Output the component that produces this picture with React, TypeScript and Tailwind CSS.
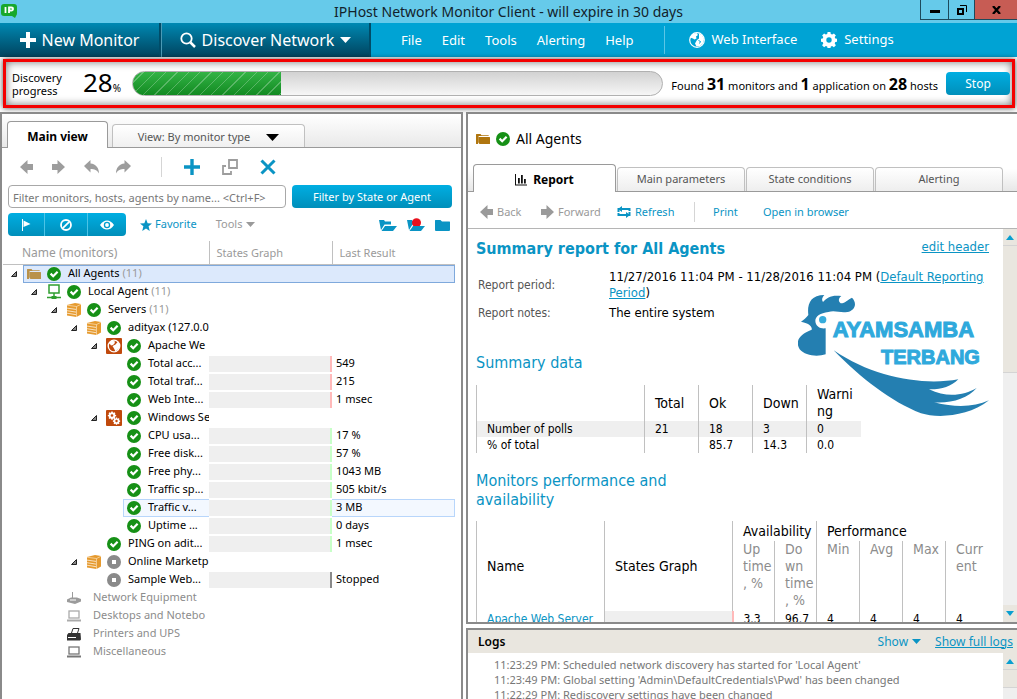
import React from 'react';

type Icon = { className?: string };

const CheckIcon = ({ className = 'size-3.5' }: Icon) => (
  <svg viewBox="0 0 14 14" className={`shrink-0 ${className}`} aria-hidden="true">
    <circle cx="7" cy="7" r="7" fill="#169016" />
    <path d="M3.6 6.6 6.2 9.2 10.6 4.8" fill="none" stroke="#fff" strokeWidth="2.2" />
  </svg>
);

const StopIcon = () => (
  <svg viewBox="0 0 14 14" className="size-3.5 shrink-0" aria-hidden="true">
    <circle cx="7" cy="7" r="7" fill="#8a8a8a" />
    <rect x="5" y="5" width="4" height="4" fill="#fff" />
  </svg>
);

const FolderIcon = ({ className = '' }: Icon) => (
  <svg viewBox="0 0 14 12" className={`h-3 w-3.5 shrink-0 ${className}`} fill="currentColor" aria-hidden="true">
    <path d="M0 1.5Q0 1 .5 1h4l1 1.2h6.8q.5 0 .5.5V3H2.6v6.5H2V11H.5Q0 11 0 10.5z" />
    <path d="M3 4h10.5q.5 0 .5.5v6q0 .5-.5.5H3.5L2.5 10V4.5z" />
  </svg>
);

const HostIcon = () => (
  <svg viewBox="0 0 14 16" className="h-4 w-3.5 shrink-0" fill="none" stroke="#2f9e2f" aria-hidden="true">
    <rect x="2" y="1" width="10" height="8" strokeWidth="1.5" />
    <path d="M7 9v5M0 13.5h14" strokeWidth="1.5" />
    <path d="M4.5 13.5h5" strokeWidth="3" />
  </svg>
);

const ServerIcon = () => (
  <svg viewBox="0 0 14 15" className="h-4 w-3.5 shrink-0" aria-hidden="true">
    <path d="M0 2.500 8 .5l6 1v10.5L9.500 14.500 0 13z" fill="#e69a2e" />
    <path d="M0 2.700 9.500 4 14 1.800M9.500 4v10.500" stroke="#fbe3bd" strokeWidth=".7" fill="none" />
    <path d="M0 5.600l9 1.300M0 8.200l9 1.400M0 10.700l9 1.500" stroke="#fff" strokeWidth=".7" fill="none" />
  </svg>
);

const ApacheIcon = () => (
  <svg viewBox="0 0 16 16" className="size-4 -mx-px shrink-0" aria-hidden="true">
    <rect width="16" height="16" fill="#c0490c" rx="1" />
    <circle cx="8" cy="8" r="5.8" fill="none" stroke="#fff" strokeWidth="1.3" />
    <path d="M2.500 5 6 2.500l3 1-.5 2L7 7l-2 .5-1-1.500zM6.500 8l3-1.500 2.500-3 1.500 3-.5 4-3.500 3-1.500-3z" fill="#fff" />
  </svg>
);

const GearShape = () => (
  <path
    fillRule="evenodd"
    d="M6.600 0h2.800l.4 2 1.400.6 1.700-1.200 2 2-1.200 1.700.6 1.400 2 .4v2.800l-2 .4-.6 1.400 1.200 1.700-2 2-1.700-1.200-1.400.6-.4 2H6.600l-.4-2-1.400-.6-1.700 1.200-2-2 1.200-1.700-.6-1.400-2-.4V6.900l2-.4.600-1.400L1.100 3.400l2-2 1.700 1.200 1.400-.6zM8 5.300a2.700 2.700 0 1 0 0 5.400 2.700 2.700 0 0 0 0-5.400z"
  />
);

const GearIcon = ({ className = 'size-4' }: Icon) => (
  <svg viewBox="0 0 16 16" className={`shrink-0 ${className}`} fill="currentColor" aria-hidden="true">
    <GearShape />
  </svg>
);

const GearsIcon = () => (
  <svg viewBox="0 0 16 16" className="size-4 -mx-px shrink-0" aria-hidden="true">
    <rect width="16" height="16" fill="#c0490c" rx="1" />
    <g fill="#fff">
      <g transform="translate(2 1.500) scale(.5)"><GearShape /></g>
      <g transform="translate(7 7.500) scale(.44)"><GearShape /></g>
    </g>
  </svg>
);

const RouterIcon = () => (
  <svg viewBox="0 0 14 12" className="h-3 w-3.5 shrink-0" fill="#9b9b9b" aria-hidden="true">
    <path d="M0 7.500 4 5.500h6l4 1.500v2.500L8 12 0 10zM5 0h1v6H5z" />
    <path d="M3 8h6" stroke="#fff" />
  </svg>
);

const LaptopIcon = ({ className = '' }: Icon) => (
  <svg viewBox="0 0 14 12" className={`h-3 w-3.5 shrink-0 ${className}`} fill="none" stroke="currentColor" aria-hidden="true">
    <rect x="2" y="1" width="10" height="7" strokeWidth="1.300" />
    <path d="M0 10.500h14" strokeWidth="2" />
  </svg>
);

const PrinterIcon = () => (
  <svg viewBox="0 0 14 14" className="size-3.5 shrink-0" aria-hidden="true">
    <path d="M4.500 6 6 1.500h6L10.500 6" fill="#fff" stroke="#333" />
    <path d="M1.500 6h12l.5 6.500-1 1H0V8z" fill="#333" />
    <path d="M1 10.500h8" stroke="#fff" />
  </svg>
);

const Arrow = ({ className = '', flip = false }: Icon & { flip?: boolean }) => (
  <svg viewBox="0 0 13 14" className={`h-3.5 w-[13px] shrink-0 ${flip ? 'rotate-180' : ''} ${className}`} fill="currentColor" aria-hidden="true">
    <path d="M0 7 7.500 0v4H13v6H7.500v4z" />
  </svg>
);

const CurveArrow = ({ flip = false }: { flip?: boolean }) => (
  <svg viewBox="0 0 15 14" className={`h-3.5 w-[15px] ${flip ? '-scale-x-100' : ''}`} fill="#9d9d9d" aria-hidden="true">
    <path d="M0 6 6.500 0v3.500C12 4 15 8 15 13.500 13 10 10.500 9 6.500 9v3.500z" />
  </svg>
);

const Caret = ({ className = '' }: Icon) => (
  <svg viewBox="0 0 10 5" preserveAspectRatio="none" className={`shrink-0 ${className}`} fill="currentColor" aria-hidden="true">
    <path d="M0 0h10L5 5z" />
  </svg>
);

const OpenFolder = ({ alert = false }: { alert?: boolean }) => (
  <svg viewBox="0 0 18 14" className="h-3.5 w-[18px]" fill="#0a94c4" aria-hidden="true">
    <path d="M0 2h5l1 1.500h6v3H5.500L2 12z" />
    {alert && <circle cx="9.500" cy="4.800" r="4.500" fill="#e8101c" />}
    <path d="M6 8h12l-4 5H2.500z" />
  </svg>
);

const GlobeIcon = () => (
  <svg viewBox="0 0 16 16" className="size-4" aria-hidden="true">
    <circle cx="8" cy="8" r="7.300" fill="none" stroke="#fff" strokeWidth="1.200" />
    <path d="M1 5.500 3.500 2 7.500 1l1.500 2-2 1.500.5 2-2 1L4 6.500zM10 1.500l3 1.500 2 4-1 4.500-3 2.500-3.500.5-1.500-3 2-3.500L10 6.500z" fill="#fff" />
    <path d="m9.500 8.500 2 1-1 2" stroke="#00a3d4" fill="none" />
  </svg>
);

const Logo = () => (
  <svg viewBox="51 27 573 369" className="h-[123px] w-[191px]" role="img" aria-label="Ayamsamba Terbang">
    <g fill="#247fb1">
      <path d="M82 90C78 58 88 30 130 30c-8 9-8 16-4 21 12-14 26-22 55-18-10 8-9 16-2 22 15-1 22-12 34-17 16 16 10 38-14 43-21 4-36-6-57 0-24 4-39 12-39 27 1 17 15 24 31 22v78c-24 8-62 5-78-15-14-24-2-45 36-59 2-8-4-18-32-24 9-5 15-11 22-20z" />
      <path d="M158 196c122 84 272 106 374 87-22 22-52 31-88 30 56 27 106 17 143-4-27 31-77 47-128 43 71 18 121 13 165-6-64 50-154 54-204 39-90-35-180-105-262-189z" />
    </g>
    <circle cx="125" cy="104" r="11" fill="#36acdc" />
    <g fill="#2fa9dc" stroke="#2fa9dc" strokeWidth="3" className="font-['Liberation_Sans',sans-serif] font-bold">
      <text x="155" y="156" fontSize="66">AYAMSAMBA</text>
      <text x="300" y="236" fontSize="60">TERBANG</text>
    </g>
  </svg>
);

type Row = {
  label: string;
  slot: string;
  open?: boolean;
  icon?: React.ReactNode;
  state?: 'ok' | 'stopped';
  count?: number;
  graph?: string;
  result?: string;
  mark?: 'selected' | 'hover';
  muted?: boolean;
};

const RED = 'bg-[#ffb9b9]';
const GREEN = 'bg-[#c8ffc8]';

const rows: Row[] = [
  { label: 'All Agents', slot: 'w-5', open: true, icon: <FolderIcon className="text-[#b9924a]" />, state: 'ok', count: 11, mark: 'selected' },
  { label: 'Local Agent', slot: 'w-10', open: true, icon: <HostIcon />, state: 'ok', count: 11 },
  { label: 'Servers', slot: 'w-15', open: true, icon: <ServerIcon />, state: 'ok', count: 11 },
  { label: 'adityax (127.0.0', slot: 'w-20', open: true, icon: <ServerIcon />, state: 'ok' },
  { label: 'Apache We', slot: 'w-25', open: true, icon: <ApacheIcon />, state: 'ok' },
  { label: 'Total acc...', slot: 'w-30', state: 'ok', graph: RED, result: '549' },
  { label: 'Total traf...', slot: 'w-30', state: 'ok', graph: RED, result: '215' },
  { label: 'Web Inte...', slot: 'w-30', state: 'ok', graph: RED, result: '1 msec' },
  { label: 'Windows Se', slot: 'w-25', open: true, icon: <GearsIcon />, state: 'ok' },
  { label: 'CPU usa...', slot: 'w-30', state: 'ok', graph: GREEN, result: '17 %' },
  { label: 'Free disk...', slot: 'w-30', state: 'ok', graph: GREEN, result: '57 %' },
  { label: 'Free phy...', slot: 'w-30', state: 'ok', graph: GREEN, result: '1043 MB' },
  { label: 'Traffic sp...', slot: 'w-30', state: 'ok', graph: GREEN, result: '505 kbit/s' },
  { label: 'Traffic v...', slot: 'w-30', state: 'ok', graph: GREEN, result: '3 MB', mark: 'hover' },
  { label: 'Uptime ...', slot: 'w-30', state: 'ok', graph: GREEN, result: '0 days' },
  { label: 'PING on adit...', slot: 'w-25', state: 'ok', graph: GREEN, result: '1 msec' },
  { label: 'Online Marketp', slot: 'w-20', open: true, icon: <ServerIcon />, state: 'stopped' },
  { label: 'Sample Web...', slot: 'w-25', state: 'stopped', graph: 'bg-[#8a8a8a]', result: 'Stopped' },
  { label: 'Network Equipment', slot: 'w-15', icon: <RouterIcon />, muted: true },
  { label: 'Desktops and Notebo', slot: 'w-15', icon: <LaptopIcon className="text-[#aaa]" />, muted: true },
  { label: 'Printers and UPS', slot: 'w-15', icon: <PrinterIcon />, muted: true },
  { label: 'Miscellaneous', slot: 'w-15', icon: <LaptopIcon className="text-[#777]" />, muted: true },
];

const markClass = {
  selected: 'border-[#7fa9dc] bg-[#dce9fc]',
  hover: 'border-[#b8d6fb] bg-[#f3f8ff]',
  none: 'border-transparent',
};

const TreeRow = ({ row }: { row: Row }) => {
  const mark = markClass[row.mark ?? 'none'];
  return (
    <tr className="h-[18px]">
      <td className="p-0">
        <div className="flex h-[18px] items-center overflow-hidden whitespace-nowrap">
          <span className={`flex shrink-0 justify-end pr-1.5 ${row.slot}`}>
            {row.open && (
              <svg viewBox="0 0 6 6" className="size-1.5" aria-hidden="true">
                <path d="M5.500.5v5h-5z" fill="#888" stroke="#222" />
              </svg>
            )}
          </span>
          <div className={`flex h-full flex-1 items-center gap-1.5 border-y border-l pl-[3px] ${mark}`}>
            {row.icon}
            {row.state === 'ok' && <CheckIcon />}
            {row.state === 'stopped' && <StopIcon />}
            <span className={row.muted ? 'pl-1.5 text-[#8c8c8c]' : 'pl-px'}>
              {row.label}
              {row.count && <span className="text-[#9a9a9a]"> ({row.count})</span>}
            </span>
          </div>
        </div>
      </td>
      <td className="p-0">
        {row.graph ? (
          <div className="flex h-4 justify-end bg-[#efefef]">
            <span className={`w-0.5 ${row.graph}`} />
          </div>
        ) : (
          <div className={`h-[18px] border-y ${mark}`} />
        )}
      </td>
      <td className="p-0">
        <div className={`flex h-[18px] items-center border-y border-r pl-1 ${mark}`}>{row.result}</div>
      </td>
    </tr>
  );
};

const blueButton = 'bg-linear-to-b from-[#00aee2] to-[#008fba] text-white';
const barButton = 'flex items-center justify-center bg-linear-to-b from-[#0089b3] to-[#00445f] text-base text-white border-r-2 border-[#004c68]';
const link = 'text-[#0a94c4]';

const LeftPane = () => (
  <section className="flex w-[463px] shrink-0 flex-col border-t-2 border-r-2 border-l-2 border-[#8a8a8a] bg-white text-[11px]">
    <div role="tablist" className="flex h-[34px] items-end gap-1 border-b border-[#9a9a9a] bg-linear-to-b from-white to-[#e9e9e9] pl-[5px]">
      <button role="tab" className="-mb-px h-[27px] w-[101px] rounded-t border border-b-0 border-[#9a9a9a] bg-white pt-1 text-xs font-bold">Main view</button>
      <button role="tab" className="flex h-[23px] w-[193px] items-center justify-center gap-4 rounded-t border border-b-0 border-[#c0c0c0] bg-linear-to-b from-white to-[#f0f0f0] pt-0.5 text-[#555]">
        View: By monitor type
        <Caret className="h-[7px] w-[13px] text-black" />
      </button>
    </div>

    <div className="flex h-[37px] items-center pl-[18px] text-[#9d9d9d]">
      <button aria-label="Back" className="w-8"><Arrow /></button>
      <button aria-label="Forward" className="w-8"><Arrow flip /></button>
      <button aria-label="Undo" className="w-8"><CurveArrow /></button>
      <button aria-label="Redo" className="w-[45px]"><CurveArrow flip /></button>
      <span className="h-5 w-px bg-[#d5d5d5]" />
      <button aria-label="Add" className="ml-[22px] w-[38px] text-[#0a94c4]">
        <svg viewBox="0 0 16 16" className="size-4" fill="currentColor"><path d="M6.300 0h3.400v6.300H16v3.400H9.700V16H6.300V9.700H0V6.300h6.300z" /></svg>
      </button>
      <button aria-label="Clone" className="w-[38px]">
        <svg viewBox="0 0 16 16" className="size-4" fill="none" stroke="currentColor" strokeWidth="1.800"><path d="M7 1h8v8H7zM4 7H1v8h8v-3" /></svg>
      </button>
      <button aria-label="Delete" className="text-[#0a94c4]">
        <svg viewBox="0 0 16 16" className="size-4" stroke="currentColor" strokeWidth="3"><path d="m1.500 1.500 13 13M14.500 1.500l-13 13" /></svg>
      </button>
    </div>

    <div className="flex gap-1.5 pr-[9px] pl-1.5">
      <input aria-label="Filter monitors" placeholder="Filter monitors, hosts, agents by name... <Ctrl+F>" className="h-[23px] min-w-0 flex-1 rounded-sm border border-[#a8a8a8] px-1 pt-px placeholder:text-[#777]" />
      <button className={`h-[23px] w-40 rounded-sm pt-px ${blueButton}`}>Filter by State or Agent</button>
    </div>

    <div className="mt-[5px] flex h-[23px] items-center pr-[11px] pl-1.5">
      <div className={`flex h-full items-stretch divide-x divide-[#4cc3e6] overflow-hidden rounded-sm ${blueButton}`}>
        <button aria-label="Flagged" className="flex w-[37px] items-center justify-center">
          <svg viewBox="0 0 10 12" className="h-3 w-2.5" fill="#fff"><path d="M1 0h1v12H1zM2.500 1.500 9.500 5l-7 3z" /></svg>
        </button>
        <button aria-label="Disabled" className="flex w-[43px] items-center justify-center">
          <svg viewBox="0 0 12 12" className="size-3" fill="none" stroke="#fff" strokeWidth="1.800"><circle cx="6" cy="6" r="5" /><path d="m2.800 9.200 6.400-6.400" /></svg>
        </button>
        <button aria-label="Visible" className="flex w-[38px] items-center justify-center">
          <svg viewBox="0 0 14 10" className="h-2.5 w-3.5"><path fill="#fff" fillRule="evenodd" d="M0 5Q3 .5 7 .5T14 5Q11 9.500 7 9.500T0 5zM7 1.800a3.200 3.200 0 1 0 0 6.400 3.200 3.200 0 0 0 0-6.400z" /><circle cx="7" cy="5" r="1.900" fill="#fff" /></svg>
        </button>
      </div>
      <button className={`ml-3.5 flex items-center gap-[3px] ${link}`}>
        <svg viewBox="0 0 24 24" className="size-3" fill="currentColor"><path d="m12 0 3.300 8.500 8.700.5-6.800 5.700L19.500 24 12 18.800 4.500 24l2.300-9.300L0 9l8.700-.5z" /></svg>
        Favorite
      </button>
      <button className="ml-[19px] flex items-center gap-1 text-[#9a9a9a]">Tools <Caret className="h-[5px] w-[9px]" /></button>
      <div className="ml-auto flex items-center gap-2.5">
        <button aria-label="Expand"><OpenFolder /></button>
        <button aria-label="Expand problems"><OpenFolder alert /></button>
        <button aria-label="Collapse">
          <svg viewBox="0 0 15 12" className="h-3 w-[15px]" fill="#0a94c4"><path d="M0 1.500Q0 1 .5 1h5l1.500 1.500h7.500q.5 0 .5.5v8q0 1-1 1H1q-1 0-1-1z" /></svg>
        </button>
      </div>
    </div>

    <div className="mt-[5px] pr-1.5 pl-px">
      <table className="w-full table-fixed border-collapse">
        <thead>
          <tr className="h-[23px] border-b border-[#c0c0c0] text-left text-[#9a9a9a]">
            <th className="w-[206px] border-r border-[#c0c0c0] p-0 pt-0.5 pl-[19px] text-xs font-normal">Name (monitors)</th>
            <th className="w-[123px] border-r border-[#c0c0c0] p-0 pt-0.5 pl-[7px] font-normal">States Graph</th>
            <th className="p-0 pt-0.5 pl-[7px] font-normal">Last Result</th>
          </tr>
        </thead>
        <tbody>
          {rows.map((row) => <TreeRow key={row.label} row={row} />)}
        </tbody>
      </table>
    </div>
  </section>
);

const ScrollBar = ({ down = false, thumb }: { down?: boolean; thumb: string }) => (
  <div aria-hidden="true" className="flex w-[14px] shrink-0 flex-col bg-[#efefef] text-[#0a9fd0]">
    <span className="flex h-[17px] shrink-0 items-center justify-center border-b border-[#d4d4d4] bg-[#e9e6df]"><Caret className="h-[5px] w-2 rotate-180" /></span>
    <span className={`shrink-0 border-b border-[#d4d4d4] bg-[#e9e6df] ${thumb}`} />
    {down && <span className="mt-auto flex h-[17px] items-center justify-center bg-[#e9e6df]"><Caret className="h-[5px] w-2" /></span>}
  </div>
);

const col = 'border-l border-[#c0c0c0] p-0 pl-2.5 text-left font-normal';

const SummaryTable = () => (
  <table className="mt-3 table-fixed border-collapse text-xs leading-4">
    <thead>
      <tr className="h-9 text-sm leading-[17px]">
        <th className={`${col} w-[168px]`} />
        <th className={`${col} w-[54px]`}>Total</th>
        <th className={`${col} w-[54px]`}>Ok</th>
        <th className={`${col} w-[54px]`}>Down</th>
        <th className={`${col} w-[54px]`}>Warni<br />ng</th>
      </tr>
    </thead>
    <tbody>
      <tr className="bg-[#efefef]">
        {['Number of polls', '21', '18', '3', '0'].map((v) => <td key={v} className={col}>{v}</td>)}
      </tr>
      <tr>
        {['% of total', '', '85.7', '14.3', '0.0'].map((v) => <td key={v} className={col}>{v}</td>)}
      </tr>
    </tbody>
  </table>
);

const PerformanceTable = () => (
  <table className="mt-3 w-[512px] table-fixed border-collapse text-sm leading-[17px]">
    <colgroup>
      <col className="w-32" /><col className="w-32" /><col className="w-[42px]" /><col className="w-[42px]" />
      <col className="w-[43px]" /><col className="w-[43px]" /><col className="w-[43px]" /><col className="w-[43px]" />
    </colgroup>
    <thead>
      <tr className="h-5">
        <th rowSpan={2} className={col}>Name</th>
        <th rowSpan={2} className={col}>States Graph</th>
        <th colSpan={2} className={col}>Availability</th>
        <th colSpan={4} className={col}>Performance</th>
      </tr>
      <tr className="h-[70px] align-top text-[#8c8c8c]">
        <th className={col}>Up<br />time<br />, %</th>
        <th className={col}>Do<br />wn<br />time<br />, %</th>
        <th className={col}>Min</th>
        <th className={col}>Avg</th>
        <th className={col}>Max</th>
        <th className={col}>Curr<br />ent</th>
      </tr>
    </thead>
    <tbody>
      <tr className="text-xs leading-4">
        <td className={`${col} whitespace-nowrap`}><a href="#apache" className={link}>Apache Web Server</a></td>
        <td className={`${col} border-r-2 border-r-[#ffb9b9] bg-[#efefef]`} />
        <td className={col}>3.3</td>
        <td className={col}>96.7</td>
        <td className={col}>4</td>
        <td className={col}>4</td>
        <td className={col}>4</td>
        <td className={col}>4</td>
      </tr>
    </tbody>
  </table>
);

const idleTab = 'h-6 w-32 rounded-t border border-b-0 border-[#c0c0c0] bg-linear-to-b from-white to-[#eee] text-[11px] text-[#555]';

const ReportPane = () => (
  <section className="flex min-h-0 flex-1 flex-col border-y-2 border-l-2 border-[#8a8a8a] bg-white">
    <div className="bg-linear-to-b from-white from-70% to-[#e6e6e6]">
      <h1 className="flex h-[49px] items-center gap-1.5 pl-2 text-sm">
        <FolderIcon className="text-[#b0760f]" />
        <CheckIcon />
        All Agents
      </h1>
      <div role="tablist" className="flex h-[29px] items-end gap-px border-b border-[#9a9a9a] pl-[5px]">
        <button role="tab" className="-mb-px flex h-7 w-[143px] items-center justify-center gap-1.5 rounded-t border border-b-0 border-[#9a9a9a] bg-white pt-0.5 font-bold">
          <svg viewBox="0 0 12 12" className="size-3" fill="#111"><path d="M0 0h1v10.500h11v1H0zM3 4h1.800v5.500H3zM6 1h1.800v8.500H6zM9 5h1.800v4.500H9z" /></svg>
          Report
        </button>
        <button role="tab" className={idleTab}>Main parameters</button>
        <button role="tab" className={idleTab}>State conditions</button>
        <button role="tab" className={idleTab}>Alerting</button>
      </div>
    </div>

    <div className={`flex h-[37px] shrink-0 items-center border-b border-[#b5b5b5] pt-1 pl-3 text-[11px] ${link}`}>
      <button className="flex w-[61px] items-center gap-1 text-[#9a9a9a]"><Arrow />Back</button>
      <button className="flex w-[76px] items-center gap-1 text-[#9a9a9a]"><Arrow flip />Forward</button>
      <button className="flex w-[77px] items-center gap-1">
        <svg viewBox="0 0 14 12" className="h-3 w-3.5" fill="none" stroke="currentColor" strokeWidth="2"><path d="M1.500 6V3h11v2M1.500 7v2h11V6" /><path d="M5 0 1 3l4 3zM9 6l4 3-4 3z" fill="currentColor" stroke="none" /></svg>
        Refresh
      </button>
      <span className="h-5 w-px bg-[#d5d5d5]" />
      <button className="ml-[18px] w-[50px] text-left">Print</button>
      <button>Open in browser</button>
    </div>

    <div className="relative flex min-h-0 flex-1">
      <div className="min-w-0 flex-1 overflow-hidden pr-3.5 pl-2 font-['DejaVu_Sans_Condensed','Noto_Sans',sans-serif] text-[13px]">
        <div className="flex h-10 items-center justify-between">
          <h2 className={`text-base font-bold ${link}`}>Summary report for All Agents</h2>
          <a href="#edit" className={`pb-1 underline ${link}`}>edit header</a>
        </div>
        <dl className="grid grid-cols-[131px_1fr] items-center gap-y-1 pl-0.5 leading-4">
          <dt className="text-xs text-[#555]">Report period:</dt>
          <dd>11/27/2016 11:04 PM - 11/28/2016 11:04 PM (<a href="#period" className={`underline ${link}`}>Default Reporting Period</a>)</dd>
          <dt className="text-xs text-[#555]">Report notes:</dt>
          <dd>The entire system</dd>
        </dl>
        <h3 className={`mt-8 text-base leading-5 ${link}`}>Summary data</h3>
        <SummaryTable />
        <h3 className={`mt-[18px] w-52 text-base leading-[19px] ${link}`}>Monitors performance and availability</h3>
        <PerformanceTable />
      </div>
      <ScrollBar down thumb="h-[127px]" />
      <div className="absolute top-[65px] right-7">
        <Logo />
      </div>
    </div>
  </section>
);

const LogsPane = () => (
  <section className="h-[71px] shrink-0 overflow-hidden border-t-2 border-l-2 border-[#8a8a8a] bg-white">
    <header className={`flex h-[23px] items-center justify-between bg-[#e9e6df] pr-1 pl-2.5 ${link}`}>
      <h2 className="font-semibold text-black">Logs</h2>
      <div className="flex items-center gap-3.5">
        <button className="flex items-center gap-1">Show <Caret className="h-[5px] w-[9px]" /></button>
        <a href="#logs" className="underline">Show full logs</a>
      </div>
    </header>
    <div className="flex">
      <ul className="flex-1 pt-1 pl-[26px] text-[11px] leading-[15px] text-[#777]">
        <li>11:23:29 PM: Scheduled network discovery has started for 'Local Agent'</li>
        <li>11:23:49 PM: Global setting 'Admin\DefaultCredentials\Pwd' has been changed</li>
        <li>11:22:29 PM: Rediscovery settings have been changed</li>
      </ul>
      <ScrollBar thumb="h-[18px]" />
    </div>
  </section>
);

const TitleBar = () => (
  <header className="grid h-[23px] grid-cols-[1fr_auto_1fr] items-start bg-[#66caea]">
    <svg viewBox="0 0 16 14" className="mt-1 ml-px h-3.5 w-4" aria-hidden="true">
      <path d="M3 0h10q3 0 3 3v6q0 2-1 3l-1 2-3-2H3Q0 12 0 9V3q0-3 3-3z" fill="#18a82c" />
      <path d="M4.500 3v6M8 9V3.500h2.300q1.700 0 1.700 1.500t-1.700 1.500H8" fill="none" stroke="#fff" strokeWidth="1.800" />
    </svg>
    <p className="text-[14px] leading-6 text-[#12222b]">IPHost Network Monitor Client - will expire in 30 days</p>
    <div className="ml-auto flex h-5 border-b border-l border-[#1d4a5c]">
      <button aria-label="Minimize" className="flex w-7 items-end justify-center border-r border-[#1d4a5c] pb-1.5"><span className="h-[3px] w-2.5 bg-black" /></button>
      <button aria-label="Restore" className="flex w-[26px] items-center justify-center border-r border-[#1d4a5c]">
        <svg viewBox="0 0 10 10" className="size-2.5" fill="none" stroke="#000"><path d="M1 4h5v5H1z" strokeWidth="2" /><path d="M3 .5h6.500V7" /></svg>
      </button>
      <button aria-label="Close" className="flex w-[42px] items-center justify-center bg-[#c75c54]">
        <svg viewBox="0 0 9 8" className="h-2 w-[9px]" stroke="#000" strokeWidth="2.300"><path d="m1 0 7 8M8 0 1 8" /></svg>
      </button>
    </div>
  </header>
);

const MenuBar = () => (
  <nav className="flex h-[34px] items-stretch bg-[#00a3d4] text-[13px] text-white">
    <button className={`${barButton} w-[161px] gap-1.5`}>
      <svg viewBox="0 0 16 16" className="size-4" fill="#fff"><path d="M6 0h4v6h6v4h-6v6H6v-6H0V6h6z" /></svg>
      New Monitor
    </button>
    <button className={`${barButton} w-[210px] gap-1.5 border-l border-l-[#4a9ab5]`}>
      <svg viewBox="0 0 16 16" className="size-4" fill="none" stroke="#fff"><circle cx="6.500" cy="6.500" r="5.200" strokeWidth="1.800" /><path d="m10.500 10.500 4.500 4.500" strokeWidth="2.500" /></svg>
      Discover Network
      <Caret className="h-1.5 w-[11px]" />
    </button>
    <div className="flex items-center gap-5 pt-0.5 pl-[30px]">
      {['File', 'Edit', 'Tools', 'Alerting', 'Help'].map((m) => <button key={m}>{m}</button>)}
    </div>
    <span className="my-[3px] ml-[30px] w-px bg-[#5cc6e6]" />
    <button className="ml-6 flex items-center gap-[7px]"><GlobeIcon />Web Interface</button>
    <button className="ml-6 flex items-center gap-[7px]"><GearIcon />Settings</button>
  </nav>
);

const DiscoveryBar = () => (
  <div className="pt-0.5 pr-0.5 pb-1 pl-[3px]">
    <div className="flex h-[49px] items-center border-[3px] border-[#f40000] pr-0.5 pl-1.5 shadow-[0_0_6px_rgba(0,0,0,0.7),inset_0_0_8px_rgba(0,0,0,0.55)]">
      <p className="w-[71px] text-[11px] leading-[13px]">Discovery<br />progress</p>
      <p className="w-[49px] pt-0.5 text-[26px] leading-8 whitespace-nowrap">28<span className="text-[10px]">%</span></p>
      <div role="progressbar" aria-label="Discovery progress" aria-valuenow={28} className="h-[25px] flex-1 overflow-hidden rounded-full border border-[#b0b0b0] bg-linear-to-b from-[#d2d2d2] to-[#f6f6f6]">
        <div className="h-full bg-[repeating-linear-gradient(135deg,transparent_0_7px,rgba(255,255,255,0.25)_7px_8px),linear-gradient(#33b345,#128a22)]" style={{ width: '28%' }} />
      </div>
      <p className="px-2 text-[11px] whitespace-nowrap">
        Found <b className="text-base">31</b> monitors and <b className="text-base">1</b> application on <b className="text-base">28</b> hosts
      </p>
      <button className={`h-[23px] w-16 rounded-sm ${blueButton}`}>Stop</button>
    </div>
  </div>
);

export default function App() {
  return (
    <div className="flex h-screen flex-col overflow-hidden bg-white font-['Noto_Sans','Open_Sans',sans-serif] text-xs text-black">
      <TitleBar />
      <MenuBar />
      <DiscoveryBar />
      <main className="flex min-h-0 flex-1 gap-[3px]">
        <LeftPane />
        <div className="flex min-w-0 flex-1 flex-col gap-1">
          <ReportPane />
          <LogsPane />
        </div>
      </main>
    </div>
  );
}
